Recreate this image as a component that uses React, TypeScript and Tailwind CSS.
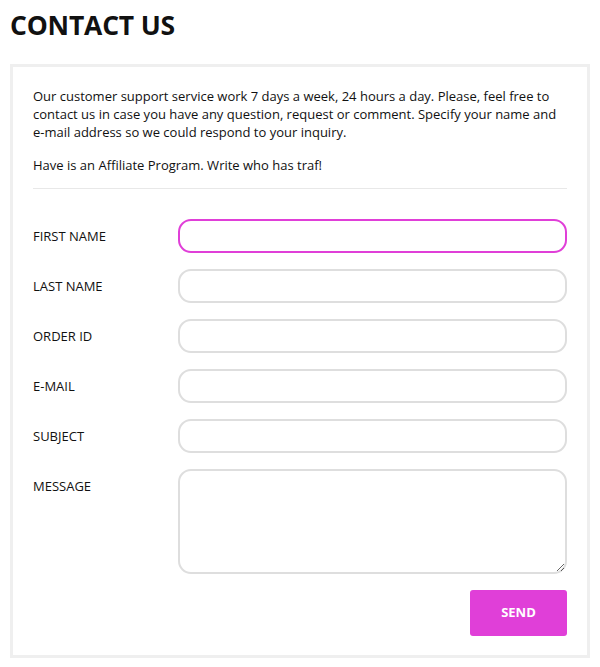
export default function App() {
  const fields = ["FIRST NAME", "LAST NAME", "ORDER ID", "E-MAIL", "SUBJECT"];

  return (
    <div className="min-h-[667px] bg-white px-[10px] pt-[6px] font-['Open_Sans',sans-serif] text-[#111]">
      <h1 className="text-[26.5px] font-bold leading-[38px] tracking-[-0.2px]">CONTACT US</h1>

      <div className="mt-[20px] w-[580px] border-[3px] border-[#efefef] px-[20px] pt-[20px] pb-[19px]">
        <p className="text-[13px] leading-[18px]">
          Our customer support service work 7 days a week, 24 hours a day. Please, feel free to
          contact us in case you have any question, request or comment. Specify your name and
          e-mail address so we could respond to your inquiry.
        </p>
        <p className="mt-[15px] text-[13px] leading-[18px]">
          Have is an Affiliate Program. Write who has traf!
        </p>

        <div className="mt-[14px] h-px bg-[#e8e8e8]" />

        <form className="mt-[30px] flex flex-col gap-[16px]" onSubmit={(e) => e.preventDefault()}>
          {fields.map((f, i) => (
            <div key={f} className="flex items-center">
              <label className="w-[145px] shrink-0 text-[13px] leading-[18px]">{f}</label>
              <input
                type="text"
                autoFocus={i === 0}
                className={`h-[34px] flex-1 rounded-[13px] border-2 bg-white px-[20px] text-[13px] outline-none ${
                  i === 0 ? "border-[#e03fd8]" : "border-[#dedede]"
                }`}
              />
            </div>
          ))}
          <div className="flex items-start">
            <label className="w-[145px] shrink-0 pt-[8px] text-[13px] leading-[18px]">MESSAGE</label>
            <textarea className="h-[105px] flex-1 resize-y rounded-[13px] border-2 border-[#dedede] bg-white px-[20px] py-[8px] text-[13px] outline-none" />
          </div>
          <div className="flex justify-end">
            <button
              type="submit"
              className="h-[46px] w-[97px] rounded-[3px] bg-[#e03fd8] text-[13px] font-bold text-white"
            >
              SEND
            </button>
          </div>
        </form>
      </div>
    </div>
  );
}
